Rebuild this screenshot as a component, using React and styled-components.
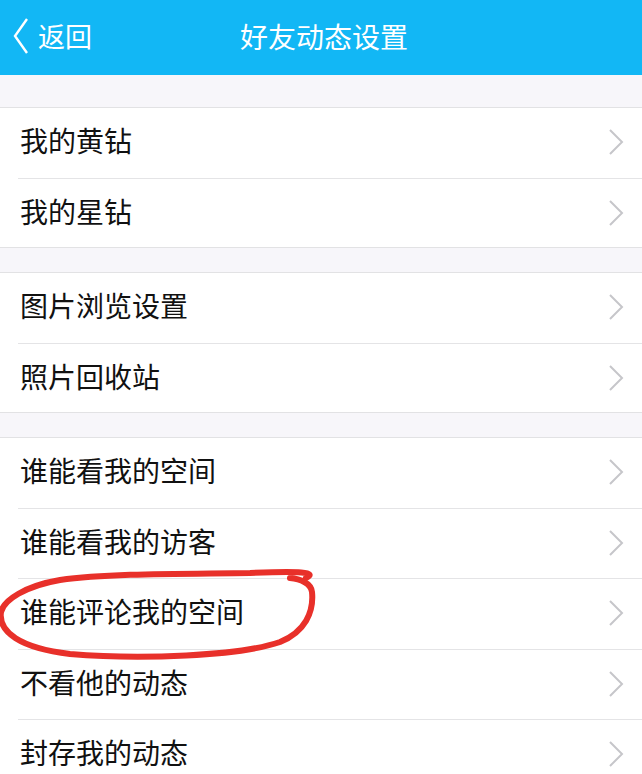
import React from "react";
import styled, { createGlobalStyle } from "styled-components";

const Global = createGlobalStyle`
  html, body { margin: 0; padding: 0; background: #f7f6fa; }
  body { font-family: "Noto Sans CJK SC", "Noto Sans", sans-serif; }
  * { box-sizing: border-box; }
`;

const Page = styled.div`
  position: relative;
  width: 642px;
  height: 774px;
  overflow: hidden;
  background: #f7f6fa;
`;

const Header = styled.header`
  height: 75px;
  background: #12b7f5;
  display: flex;
  align-items: center;
  justify-content: center;
  position: relative;
  color: #fff;
`;

const Back = styled.div`
  position: absolute;
  left: 13px;
  top: 0;
  height: 75px;
  display: flex;
  align-items: center;
  gap: 9px;
  font-size: 27px;
  padding-bottom: 4px;
`;

const Title = styled.h1`
  margin: 0 0 0 6px;
  font-size: 28px;
  font-weight: 400;
  padding-bottom: 4px;
`;

const Group = styled.section`
  margin-top: ${(p) => p.$top}px;
  background: #fff;
  box-shadow: inset 0 1px 0 #e2e2e4, inset 0 -1px 0 #e2e2e4;
`;

const Row = styled.div`
  height: 70.5px;
  display: flex;
  align-items: center;
  justify-content: space-between;
  padding: 0 18px 0 20px;
  position: relative;
  font-size: 28px;
  color: #111;
  & + &::before {
    content: "";
    position: absolute;
    left: 18px;
    right: 0;
    top: 0;
    height: 1px;
    background: #e4e4e6;
  }
`;

const Label = styled.span`
  padding-bottom: 4px;
`;

const Chevron = () => (
  <svg width="16" height="28" viewBox="0 0 16 28">
    <path d="M2 2 L14 14 L2 26" fill="none" stroke="#c6c6ca" strokeWidth="2" />
  </svg>
);

const BackChevron = () => (
  <svg width="16" height="36" viewBox="0 0 16 36">
    <path d="M14 1 L2 18 L14 35" fill="none" stroke="#fff" strokeWidth="2.4" />
  </svg>
);

const Mark = styled.svg`
  position: absolute;
  left: 0;
  top: 0;
  pointer-events: none;
`;

const groups = [
  { top: 32, items: ["我的黄钻", "我的星钻"] },
  { top: 24, items: ["图片浏览设置", "照片回收站"] },
  { top: 24, items: ["谁能看我的空间", "谁能看我的访客", "谁能评论我的空间", "不看他的动态", "封存我的动态"] },
];

export default function App() {
  return (
    <Page>
      <Global />
      <Header>
        <Back>
          <BackChevron />
          <span>返回</span>
        </Back>
        <Title>好友动态设置</Title>
      </Header>
      {groups.map((g, i) => (
        <Group key={i} $top={g.top}>
          {g.items.map((t) => (
            <Row key={t}>
              <Label>{t}</Label>
              <Chevron />
            </Row>
          ))}
        </Group>
      ))}
      <Mark width="642" height="774" viewBox="0 0 642 774">
        <path
          d="M306 578 C318 572 300 571 250 573 C190 574 110 573 60 580 C25 586 4 600 1 612 C-2 632 20 648 70 654 C140 660 240 656 280 642 C305 632 314 612 312 592 C311 583 300 579 290 578"
          fill="none"
          stroke="#e8302a"
          strokeWidth="6"
          strokeLinecap="round"
        />
      </Mark>
    </Page>
  );
}
